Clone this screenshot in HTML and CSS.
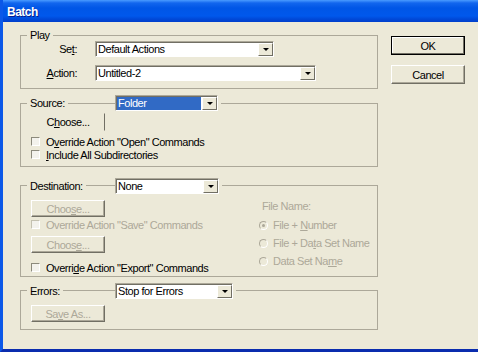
FILE: index.html
```html
<!DOCTYPE html>
<html>
<head>
    <title>Batch</title>
    <link rel="stylesheet" href="styles.css">
</head>
<body>
<div class="window">
    <div class="titlebar">Batch</div>

    <div class="client">
        <div class="groups">

            <div class="group play">
                <div class="group-head"><span class="caption">Play</span></div>
                <div class="field-row">
                    <span class="field-label">Se<u>t</u>:</span>
                    <div class="combo combo-set"><span class="value">Default Actions</span><span class="drop"></span></div>
                </div>
                <div class="field-row second">
                    <span class="field-label"><u>A</u>ction:</span>
                    <div class="combo combo-action"><span class="value">Untitled-2</span><span class="drop"></span></div>
                </div>
            </div>

            <div class="group source">
                <div class="group-head tall">
                    <div class="head-cell"><span class="caption">Source:</span></div>
                    <div class="combo-wrap">
                        <div class="combo combo-folder"><span class="value selected">Folder</span><span class="drop"></span></div>
                    </div>
                </div>
                <div class="btn choose flat">C<u>h</u>oose...</div>
                <div class="check-row first"><span class="box"></span><span>O<u>v</u>erride Action "Open" Commands</span></div>
                <div class="check-row"><span class="box"></span><span><u>I</u>nclude All Subdirectories</span></div>
            </div>

            <div class="group destination">
                <div class="group-head tall">
                    <div class="head-cell"><span class="caption">Destination:</span></div>
                    <div class="combo-wrap">
                        <div class="combo combo-none"><span class="value">None</span><span class="drop"></span></div>
                    </div>
                </div>
                <div class="dest-body">
                    <div class="dest-left">
                        <div class="btn choose disabled d1">Choo<u>s</u>e...</div>
                        <div class="check-row disabled c1"><span class="box"></span><span>Override Action "Save" Commands</span></div>
                        <div class="btn choose disabled d2">Choos<u>e</u>...</div>
                        <div class="check-row c2"><span class="box"></span><span>Overri<u>d</u>e Action "Export" Commands</span></div>
                    </div>
                    <div class="dest-right disabled">
                        <div class="file-label">File Name:</div>
                        <div class="radio-list">
                            <div class="radio-row"><span class="radio checked"></span><span>File + <u>N</u>umber</span></div>
                            <div class="radio-row"><span class="radio"></span><span>File + Da<u>t</u>a Set Name</span></div>
                            <div class="radio-row"><span class="radio"></span><span>Data Set Na<u>m</u>e</span></div>
                        </div>
                    </div>
                </div>
            </div>

            <div class="group errors">
                <div class="group-head tall">
                    <div class="head-cell"><span class="caption">Errors:</span></div>
                    <div class="combo-wrap">
                        <div class="combo combo-errors"><span class="value">Stop for Errors</span><span class="drop"></span></div>
                    </div>
                </div>
                <div class="btn choose disabled save">Sa<u>v</u>e As...</div>
            </div>

        </div>

        <div class="buttons">
            <div class="btn default">OK</div>
            <div class="btn cancel">Cancel</div>
        </div>
    </div>
</div>
</body>
</html>
```

FILE: styles.css
```css
body {
    margin: 0;
    font-family: "Liberation Sans", Arial, sans-serif;
    font-size: 11px;
    letter-spacing: -0.45px;
    color: #000;
}

.window {
    width: 475px;
    height: 349px;
    background: #ece9d8;
    border-left: 3px solid #0b58e8;
    border-bottom: 3px solid #0a2cae;
    display: flex;
    flex-direction: column;
    overflow: hidden;
}

/* title bar */
.titlebar {
    height: 19px;
    margin-left: -3px;
    padding: 3px 0 0 7px;
    line-height: 19px;
    font-size: 12px;
    font-weight: bold;
    letter-spacing: -0.5px;
    color: #fff;
    text-shadow: 1px 1px #0a1d8a;
    background: linear-gradient(#4a9bff 0, #1266ee 3px, #0056e6 8px, #0058ec 16px, #0049d8 19px, #003fcc 22px);
}

.client {
    flex: 1;
    display: flex;
    padding-left: 17px;
}

.groups {
    width: 358px;
}

/* group boxes */
.group {
    box-sizing: border-box;
    border: 1px solid #aca899;
}

.group-head {
    display: flex;
    align-items: center;
    height: 11px;
    margin: -6px 0 0 6px;
}

.group-head.tall {
    height: 16px;
    margin-top: -8px;
}

.caption {
    background: #ece9d8;
    padding: 0 3px;
    line-height: 11px;
}

.head-cell {
    width: 88px;
}

.combo-wrap {
    background: #ece9d8;
    padding-right: 3px;
}

.play {
    margin-top: 13px;
    padding-bottom: 7px;
}

.source {
    margin-top: 14px;
    padding-bottom: 5px;
}

.source .group-head {
    margin-top: -9px;
}

.destination {
    margin-top: 18px;
    padding-bottom: 2px;
}

.errors {
    margin-top: 13px;
    padding-bottom: 7px;
}

.field-row {
    display: flex;
    align-items: center;
    height: 16px;
}

.field-row.second {
    margin-top: 8px;
}

.field-label {
    width: 56px;
    text-align: right;
    margin-right: 18px;
}

/* drop-down lists */
.combo {
    display: flex;
    box-sizing: border-box;
    height: 16px;
    padding: 1px 0 0 1px;
    background: #fff;
    border: 1px solid;
    border-color: #aca899 #fff #fff #aca899;
    box-shadow: inset 1px 1px #716f64;
}

.combo .value {
    flex: 1;
    line-height: 13px;
    padding-left: 1px;
    white-space: nowrap;
    overflow: hidden;
}

.combo .value.selected {
    background: #316ac5;
    color: #fff;
    margin-right: 1px;
}

.combo .drop {
    width: 15px;
    box-sizing: border-box;
    background: #ece9d8;
    border: 1px solid;
    border-color: #fff #716f64 #716f64 #fff;
    display: flex;
    align-items: center;
    justify-content: center;
}

.combo .drop::after {
    content: "";
    border-left: 3px solid transparent;
    border-right: 3px solid transparent;
    border-top: 3px solid #000;
}

.combo-set { width: 179px; }
.combo-action { width: 221px; }
.combo-folder { width: 103px; }
.combo-none { width: 104px; }
.combo-errors { width: 118px; }

/* push buttons */
.btn {
    box-sizing: border-box;
    display: flex;
    align-items: center;
    justify-content: center;
    border: 1px solid;
    border-color: #fff #716f64 #716f64 #fff;
    box-shadow: inset -1px -1px #aca899;
}

.btn.disabled,
.disabled {
    color: #aca899;
}

.choose {
    width: 74px;
    height: 17px;
    margin-left: 10px;
}

.choose.flat {
    height: 18px;
    margin-top: 2px;
    border-color: transparent #716f64 transparent transparent;
    box-shadow: none;
}

.d1 { margin-top: 6px; }
.d2 { margin-top: 5px; }
.save { margin-top: 6px; }

/* check boxes */
.check-row {
    display: flex;
    align-items: center;
    height: 13px;
    padding-left: 10px;
}

.check-row.first { margin-top: 4px; }
.check-row.c1 { margin-top: 1px; }
.check-row.c2 { margin-top: 8px; }

.box {
    width: 9px;
    height: 9px;
    box-sizing: border-box;
    border: 1px solid;
    border-color: #8c8a7c #fff #fff #8c8a7c;
    background: #f3f2ec;
    margin-right: 6px;
}

.check-row.disabled .box {
    border-color: #c4c1b0 #fff #fff #c4c1b0;
}

/* destination layout */
.dest-body {
    display: flex;
}

.dest-left {
    width: 238px;
}

.file-label {
    line-height: 12px;
    margin-top: 6px;
    padding-left: 3px;
}

.radio-list {
    margin-top: 4px;
}

.radio-row {
    display: flex;
    align-items: center;
    height: 18px;
}

.radio {
    width: 9px;
    height: 9px;
    box-sizing: border-box;
    border-radius: 50%;
    border: 1px solid;
    border-color: #aca899 #fff #fff #aca899;
    margin-right: 5px;
    display: flex;
    align-items: center;
    justify-content: center;
}

.radio.checked::after {
    content: "";
    width: 3px;
    height: 3px;
    border-radius: 50%;
    background: #aca899;
}

/* OK / Cancel */
.buttons {
    margin-left: 13px;
}

.buttons .btn {
    width: 74px;
    height: 19px;
}

.btn.default {
    margin-top: 14px;
    border-color: #000;
    box-shadow: inset -1px -1px #716f64, inset 1px 1px #fff;
}

.btn.cancel {
    margin-top: 10px;
}
```
